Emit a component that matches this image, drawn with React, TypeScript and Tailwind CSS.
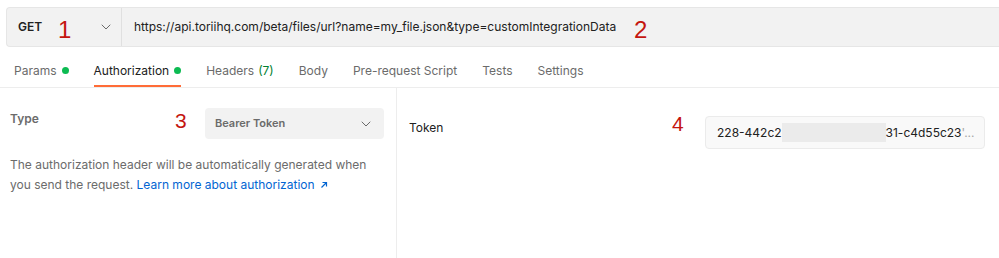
import React from "react";

const Chevron: React.FC<{ className?: string }> = ({ className }) => (
  <svg className={className} width="10" height="6" viewBox="0 0 10 6" fill="none">
    <path d="M1 1l4 4 4-4" stroke="#6b6b6b" strokeWidth="1" strokeLinecap="round" strokeLinejoin="round" />
  </svg>
);

const Dot = () => <span className="inline-block w-[7px] h-[7px] rounded-full bg-[#0cbb52] ml-[5px]" />;

const Mark: React.FC<{ children: React.ReactNode; className: string }> = ({ children, className }) => (
  <span className={`absolute font-['Liberation_Sans',Arial,sans-serif] text-[#c4160f] leading-none ${className}`}>{children}</span>
);

const tabs = [
  { label: "Params", dot: true },
  { label: "Authorization", dot: true, active: true },
  { label: "Headers", count: "(7)" },
  { label: "Body" },
  { label: "Pre-request Script" },
  { label: "Tests" },
  { label: "Settings" },
];

export default function App() {
  return (
    <div className="w-[999px] h-[258px] bg-white overflow-hidden font-['Inter','Noto_Sans',sans-serif] text-[12px] text-[#212121]">
      {/* Request bar */}
      <div className="pt-[7px] pl-[6px]">
        <div className="relative flex h-[40px] bg-[#f2f2f2] border border-r-0 border-[#e6e6e6] rounded-l-[4px]">
          <div className="relative flex items-center w-[115px] pl-[11px] pr-[10px] border-r border-[#e0e0e0]">
            <span className="font-semibold text-[12px] text-[#212121]">GET</span>
            <Mark className="left-[51px] top-[10px] text-[24px]">1</Mark>
            <Chevron className="ml-auto" />
          </div>
          <div className="flex items-center pl-[12px] text-[12px] text-[#212121]">
            https://api.toriihq.com/beta/files/url?name=my_file.json&amp;type=customIntegrationData
          </div>
          <Mark className="left-[627px] top-[10px] text-[24px]">2</Mark>
        </div>
      </div>

      {/* Tabs */}
      <div className="flex h-[41px] pl-[14px] gap-[25px] border-b border-[#ededed]">
        {tabs.map((t) => (
          <div
            key={t.label}
            className={`flex items-center pt-[9px] border-b-2 ${t.active ? "border-[#ff6c37] text-[#212121]" : "border-transparent text-[#6b6b6b]"}`}
          >
            <span>{t.label}</span>
            {t.count && <span className="ml-[4px] text-[#007f31]">{t.count}</span>}
            {t.dot && <Dot />}
          </div>
        ))}
      </div>

      {/* Auth content */}
      <div className="flex h-[170px]">
        <div className="relative w-[397px] shrink-0 border-r border-[#ededed] px-[10px] pt-[20px]">
          <div className="flex items-start">
            <span className="mt-[1px] leading-[20px] font-semibold text-[#6b6b6b]">Type</span>
            <div className="ml-auto mr-[2px] flex items-center w-[179px] h-[31px] rounded-[4px] bg-[#f2f2f2] pl-[10px] pr-[13px]">
              <span className="font-semibold text-[11px] text-[#6b6b6b]">Bearer Token</span>
              <Chevron className="ml-auto" />
            </div>
          </div>
          <Mark className="left-[175px] top-[22px] text-[21px]">3</Mark>
          <p className="mt-[16px] w-[372px] leading-[20px] text-[#6b6b6b]">
            The authorization header will be automatically generated when you send the request.{" "}
            <span className="text-[#0265d2]">
              Learn more about authorization
              <svg className="inline-block ml-[5px] mb-[1px]" width="8" height="8" viewBox="0 0 8 8" fill="none">
                <path d="M1.5 6.5l5-5M2.5 1.5h4v4" stroke="#0265d2" strokeWidth="1.2" />
              </svg>
            </span>
          </p>
        </div>

        <div className="relative flex-1 flex items-start pl-[12px] pr-[14px] pt-[28px]">
          <span className="mt-[2px] leading-[20px] text-[#212121]">Token</span>
          <Mark className="left-[275px] top-[25px] text-[21px]">4</Mark>
          <div className="ml-auto flex items-center w-[280px] h-[33px] rounded-[4px] bg-[#f9f9f9] border border-[#ebebeb] pl-[11px] whitespace-nowrap overflow-hidden">
            <span>228-442c2</span>
            <span className="inline-block w-[104px] h-[19px] bg-[#ebebeb]" />
            <span>31-c4d55c23</span>
            <span className="text-[#a6a6a6]">'...</span>
          </div>
        </div>
      </div>
    </div>
  );
}
